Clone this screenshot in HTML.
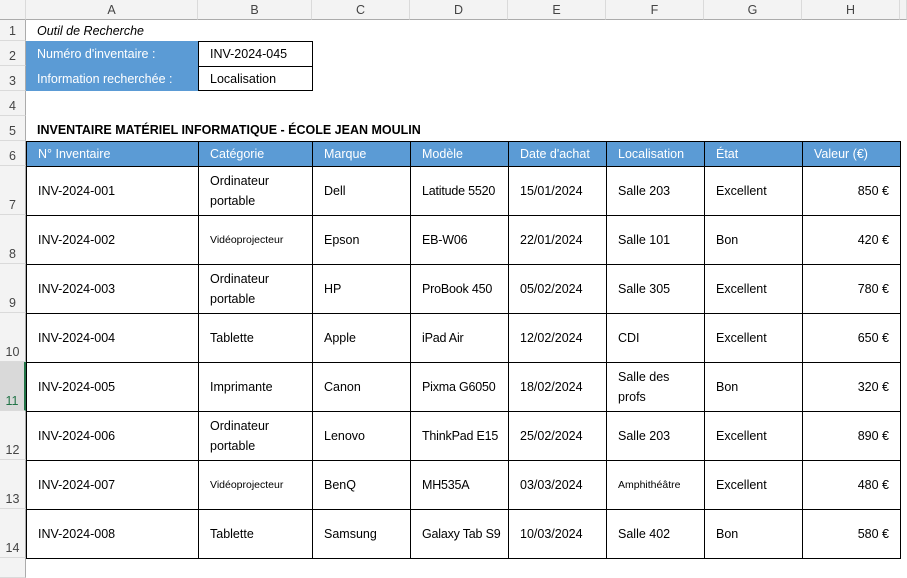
<!DOCTYPE html>
<html><head><meta charset="utf-8"><style>
*{margin:0;padding:0;box-sizing:border-box}
body{width:907px;height:566px;background:#fff;position:relative;overflow:hidden;font-family:"Liberation Sans",sans-serif;font-size:12.5px;color:#000}
.ch{position:absolute;top:0;height:20px;background:#f3f3f3;border-right:1px solid #dadada;border-bottom:1px solid #ababab;text-align:center;line-height:20px;color:#444;font-size:12.5px}
.rh{position:absolute;left:0;width:26px;background:#f3f3f3;border-bottom:1px solid #dadada;border-right:1px solid #ababab;text-align:center;color:#444;font-size:12.5px;display:flex;align-items:flex-end;justify-content:center;padding-bottom:2px}
.c{position:absolute;display:flex;align-items:center;padding:0 11px;line-height:20px;white-space:nowrap}
.b{border:1px solid #000}
.h{background:#5b9bd5;color:#fff}
.s{font-size:10.5px}
.r{justify-content:flex-end}
</style></head><body>
<div class="ch" style="left:0;width:26px"></div>
<div class="ch" style="left:26px;width:172px">A</div>
<div class="ch" style="left:198px;width:114px">B</div>
<div class="ch" style="left:312px;width:98px">C</div>
<div class="ch" style="left:410px;width:98px">D</div>
<div class="ch" style="left:508px;width:98px">E</div>
<div class="ch" style="left:606px;width:98px">F</div>
<div class="ch" style="left:704px;width:98px">G</div>
<div class="ch" style="left:802px;width:98px">H</div>
<div class="ch" style="left:900px;width:7px"></div>

<div class="rh" style="top:20px;height:21px">1</div>
<div class="rh" style="top:41px;height:25px">2</div>
<div class="rh" style="top:66px;height:25px">3</div>
<div class="rh" style="top:91px;height:25px">4</div>
<div class="rh" style="top:116px;height:25px">5</div>
<div class="rh" style="top:141px;height:25px">6</div>
<div class="rh" style="top:166px;height:49px">7</div>
<div class="rh" style="top:215px;height:49px">8</div>
<div class="rh" style="top:264px;height:49px">9</div>
<div class="rh" style="top:313px;height:49px">10</div>
<div class="rh" style="top:362px;height:49px;background:#d9d9d9;border-right:2px solid #217346;color:#217346">11</div>
<div class="rh" style="top:411px;height:49px">12</div>
<div class="rh" style="top:460px;height:49px">13</div>
<div class="rh" style="top:509px;height:49px">14</div>
<div class="rh" style="top:558px;height:20px"></div>

<div class="c" style="left:26px;top:20px;height:21px;font-style:italic">Outil de Recherche</div>
<div class="c h" style="left:26px;top:41px;width:173px;height:25px">Numéro d'inventaire :</div>
<div class="c b" style="left:198px;top:41px;width:115px;height:26px">INV-2024-045</div>
<div class="c h" style="left:26px;top:66px;width:173px;height:25px">Information recherchée :</div>
<div class="c b" style="left:198px;top:66px;width:115px;height:25px">Localisation</div>
<div class="c" style="left:26px;top:116px;height:25px;font-weight:bold;padding-top:2px">INVENTAIRE MATÉRIEL INFORMATIQUE - ÉCOLE JEAN MOULIN</div>

<div id="t"></div>
<script>
var X=[26,198,312,410,508,606,704,802,900];
var hdr=["N° Inventaire","Catégorie","Marque","Modèle","Date d'achat","Localisation","État","Valeur (€)"];
var rows=[
["INV-2024-001","Ordinateur<br>portable","Dell","Latitude 5520","15/01/2024","Salle 203","Excellent","850 €"],
["INV-2024-002","~Vidéoprojecteur","Epson","EB-W06","22/01/2024","Salle 101","Bon","420 €"],
["INV-2024-003","Ordinateur<br>portable","HP","ProBook 450","05/02/2024","Salle 305","Excellent","780 €"],
["INV-2024-004","Tablette","Apple","iPad Air","12/02/2024","CDI","Excellent","650 €"],
["INV-2024-005","Imprimante","Canon","Pixma G6050","18/02/2024","Salle des<br>profs","Bon","320 €"],
["INV-2024-006","Ordinateur<br>portable","Lenovo","ThinkPad E15","25/02/2024","Salle 203","Excellent","890 €"],
["INV-2024-007","~Vidéoprojecteur","BenQ","MH535A","03/03/2024","~Amphithéâtre","Excellent","480 €"],
["INV-2024-008","Tablette","Samsung","Galaxy Tab S9","10/03/2024","Salle 402","Bon","580 €"]];
var h="";
for(var i=0;i<8;i++){
 h+='<div class="c b h" style="left:'+X[i]+'px;top:141px;width:'+(X[i+1]-X[i]+1)+'px;height:26px">'+hdr[i]+'</div>';
}
for(var r=0;r<8;r++){
 var y=166+r*49;
 for(var i=0;i<8;i++){
  var t=rows[r][i],cls="c b";
  if(t[0]=="~"){t=t.slice(1);cls+=" s";}
  if(i==7)cls+=" r";
  h+='<div class="'+cls+'" style="left:'+X[i]+'px;top:'+y+'px;width:'+(X[i+1]-X[i]+1)+'px;height:50px'+(i==3?';padding-right:2px;letter-spacing:-0.2px':'')+'">'+t+'</div>';
 }
}
document.getElementById("t").outerHTML=h;
</script>
</body></html>
